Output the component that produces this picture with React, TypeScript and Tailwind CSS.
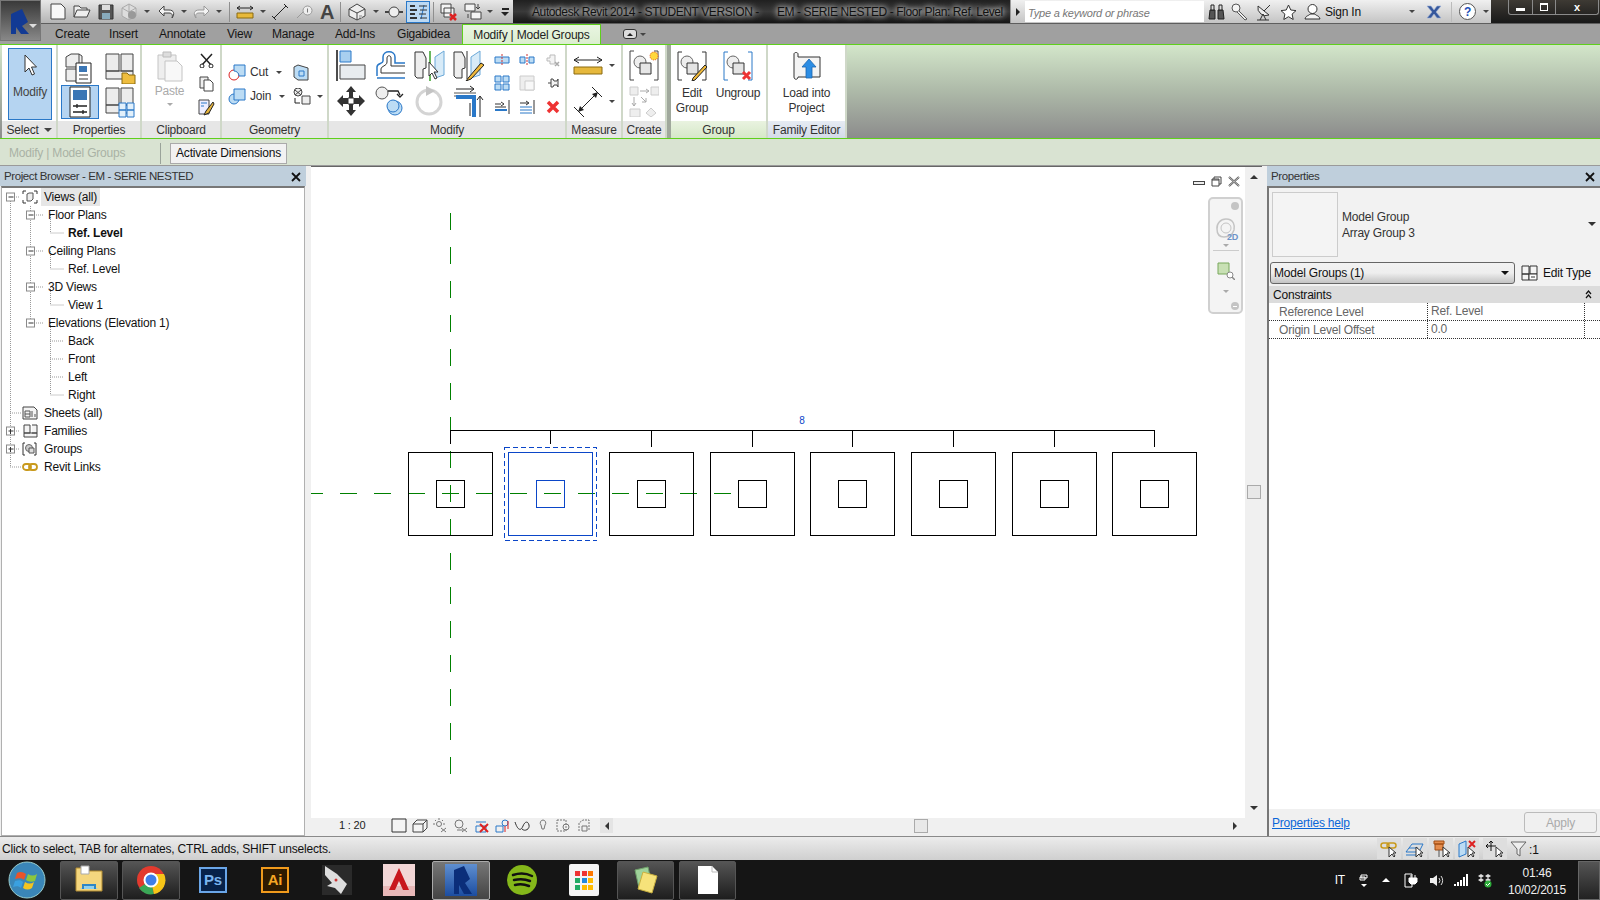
import type { ReactNode } from "react";

type IcProps = { w: number; h: number; children: ReactNode; className?: string };

function Ic({ w, h, children, className }: IcProps) {
  return (
    <svg width={w} height={h} viewBox={`0 0 ${w} ${h}`} className={className} fill="none">
      {children}
    </svg>
  );
}

const BL = "#2a78c8";
const BF = "#bcdcf4";
const DK = "#444";

function Caret({ className = "" }: { className?: string }) {
  return <span className={`inline-block h-0 w-0 border-x-[3px] border-t-[3px] border-x-transparent border-t-[#444] ${className}`} />;
}

function Sep() {
  return <div className="mx-[3px] h-[20px] w-px shrink-0 bg-[#8f8f8f]" />;
}

function Q({ w = 24, children }: { w?: number; children: ReactNode }) {
  return <div className="flex h-[23px] shrink-0 items-center justify-center" style={{ width: w }}>{children}</div>;
}

function QuickAccess() {
  return (
    <div className="flex h-[23px] w-[513px] shrink-0 items-center bg-linear-to-b from-[#e8e8e8] to-[#b4b4b4] pl-[46px]">
      <Q><Ic w={16} h={17}><path d="M1 1h10l4 4v11H1z" fill="#f8f8f8" stroke={DK} /></Ic></Q>
      <Q><Ic w={18} h={15}><path d="M1 13V2h5l2 2h6v2M1 13l3-7h13l-3 7z" fill="#eee" stroke={DK} /></Ic></Q>
      <Q><Ic w={16} h={16}><path d="M1 1h14v14H1z" fill="#555" stroke="#333" /><path d="M4 1h8v5H4z" fill="#ddd" /><path d="M4 9h8v6H4z" fill="#8ab" /></Ic></Q>
      <Q w={22}><Ic w={18} h={18}><path d="M9 1l7 4v8l-7 4-7-4V5z" fill="#ddd" stroke="#aaa" /><path d="M9 1v8l7-4M9 9l-7-4M9 9v8" stroke="#aaa" /><circle cx="12" cy="12" r="4" fill="#999" /></Ic></Q>
      <Q w={14}><Caret /></Q>
      <Q><Ic w={17} h={14}><path d="M6 1L1 6l5 5V8h5c3 0 4 2 3 5 3-4 2-8-3-8H6z" fill="#f4f4f4" stroke={DK} /></Ic></Q>
      <Q w={12}><Caret /></Q>
      <Q w={22}><Ic w={17} h={14}><path d="M11 1l5 5-5 5V8H6c-3 0-4 2-3 5-3-4-2-8 3-8h5z" fill="#f4f4f4" stroke="#999" /></Ic></Q>
      <Q w={14}><Caret /></Q>
      <Sep />
      <Q w={24}><Ic w={18} h={14}><path d="M1 3h16M1 3l3-2M1 3l3 2M17 3l-3-2M17 3l-3 2" stroke="#222" /><path d="M1 8h16v5H1z" fill="#e8b93a" stroke="#8a6a10" /></Ic></Q>
      <Q w={12}><Caret /></Q>
      <Q w={22}><Ic w={18} h={18}><path d="M3 15L15 3M1 13l4 4M13 1l4 4" stroke="#222" /></Ic></Q>
      <Q w={26}><Ic w={18} h={16}><path d="M2 14l6-6" stroke="#999" /><rect x="8" y="2" width="9" height="9" rx="4.5" fill="#eee" stroke="#999" /><path d="M12.5 4.5v4" stroke="#777" /></Ic></Q>
      <div className="flex w-[20px] shrink-0 justify-center text-[20px] font-bold leading-none text-[#444]">A</div>
      <Sep />
      <Q w={26}><Ic w={18} h={18}><path d="M9 1l8 5v7l-8 4-8-4V6z" fill="#eee" stroke={DK} /><path d="M1 6l8 4 8-4M9 10v7" stroke={DK} /><path d="M11 12h3v3h-3z" fill="#bbb" /></Ic></Q>
      <Q w={12}><Caret /></Q>
      <Q w={24}><Ic w={18} h={14}><circle cx="9" cy="7" r="5" fill="#eee" stroke={DK} /><path d="M0 7h4M14 7h4" stroke={DK} strokeWidth="2" /></Ic></Q>
      <div className="flex h-[22px] w-[24px] shrink-0 items-center justify-center border border-[#2a78c8] bg-[#bcd9f3]">
        <Ic w={18} h={16}><path d="M1 2h5M1 6h7M1 10h5M1 14h7" stroke="#333" strokeWidth="2" /><path d="M12 15l3-14" stroke={BL} /><path d="M10 2h8M11 6h7M10 10h7M11 14h7" stroke="#333" /></Ic>
      </div>
      <Sep />
      <Q w={24}><Ic w={18} h={18}><path d="M1 1h10v9H1zM4 5h10v9H4z" fill="#f4f4f4" stroke={DK} /><path d="M10 11l6 6M16 11l-6 6" stroke="#d22" strokeWidth="2.5" /></Ic></Q>
      <Q w={24}><Ic w={18} h={17}><path d="M1 1h10v7H1zM7 9h10v7H7z" fill="#f4f4f4" stroke={DK} /><path d="M14 1v5M12 4l2 2 2-2M4 11v4" stroke={DK} /></Ic></Q>
      <Q w={10}><Caret /></Q>
      <div className="ml-[3px] flex w-[14px] flex-col items-center gap-[2px]">
        <div className="h-[2px] w-[7px] bg-[#222]" />
        <span className="h-0 w-0 border-x-[4px] border-t-[4px] border-x-transparent border-t-[#222]" />
      </div>
    </div>
  );
}

function SearchCluster() {
  return (
    <div className="flex h-[23px] w-[481px] shrink-0 items-center border-l border-[#999] bg-linear-to-b from-[#f0f0f0] to-[#c4c4c4]">
      <div className="flex w-[14px] justify-center">
        <span className="h-0 w-0 border-y-[4px] border-l-[4px] border-y-transparent border-l-[#222]" />
      </div>
      <div className="flex h-[21px] w-[179px] items-center bg-white pl-[3px] pt-[3px] text-[11px] italic text-[#777]">Type a keyword or phrase</div>
      <div className="flex items-center">
        <Q w={24}><Ic w={17} h={16}><path d="M2 6h5v9H1zM10 6h5l1 9h-6z" fill="#555" stroke="#222" /><path d="M3 1h3v5H3zM11 1h3v5h-3z" fill="#ddd" stroke="#222" /></Ic></Q>
        <Q w={24}><Ic w={18} h={18}><circle cx="5" cy="5" r="4" fill="#f4f4f4" stroke="#555" /><path d="M8 8l8 8-2 1-8-8" fill="#eee" stroke="#555" /></Ic></Q>
        <Q w={24}><Ic w={18} h={18}><path d="M3 3a8 8 0 0 0 11 9z" fill="#eee" stroke="#333" /><path d="M9 8l6-6M2 17h12M8 11l-3 6M8 11l3 6" stroke="#333" /></Ic></Q>
        <Q w={24}><Ic w={17} h={16}><path d="M8.5 1l2.3 5 5.2.6-3.9 3.5 1.1 5.4-4.7-2.8-4.7 2.8 1.1-5.4L1 6.600l5.200-.6z" fill="#fff" stroke="#333" /></Ic></Q>
        <Q w={24}><Ic w={17} h={18}><circle cx="8.500" cy="6" r="4.500" fill="#fff" stroke="#333" /><path d="M1 16c1-4 4-3 5-5h5c1 2 4 1 5 5z" fill="#f4f4f4" stroke="#333" /></Ic></Q>
      </div>
      <span className="ml-[1px] w-[79px] text-[12px] text-[#111]">Sign In</span>
      <Caret className="mr-[9px] ml-[5px]" />
      <div className="flex w-[20px] justify-center">
        <Ic w={16} h={14}><path d="M1 1h4l3 4 3-4h4l-5 6 5 6h-4l-3-4-3 4H1l5-6z" fill="#35579b" stroke="#9cb0d8" strokeWidth=".6" /></Ic>
      </div>
      <div className="mx-[7px] h-[20px] w-px bg-[#bbb]" />
      <div className="flex h-[17px] w-[17px] items-center justify-center rounded-full border border-[#555] bg-white text-[12px] font-bold leading-none text-[#1c4fb8]">?</div>
      <Caret className="ml-[7px]" />
    </div>
  );
}

function TitleBar() {
  return (
    <div className="flex h-[23px] shrink-0 items-stretch">
      <QuickAccess />
      <div className="flex w-[497px] shrink-0 items-center whitespace-nowrap bg-linear-to-b from-[#202020] via-[#3a3a3a] to-[#151515] pl-[19px] text-[12px] tracking-[-0.4px] text-[#111] [text-shadow:0_0_5px_#ddd,0_0_7px_#ddd]">
        <span>Autodesk Revit 2014 - STUDENT VERSION -</span>
        <span className="ml-[18px]">EM - SERIE NESTED - Floor Plan: Ref. Level</span>
      </div>
      <SearchCluster />
      <div className="flex flex-1 bg-linear-to-b from-[#3e3a34] to-[#191919] pl-[17px]">
        <div className="flex h-[15px] w-[91px] rounded-b-[3px] border border-t-0 border-[#8a8a8a] text-[11px] font-bold text-white">
          <div className="flex w-[24px] items-end justify-center border-r border-[#8a8a8a] pb-[3px]"><div className="h-[3px] w-[9px] bg-white" /></div>
          <div className="flex w-[23px] items-center justify-center border-r border-[#8a8a8a]"><div className="h-[8px] w-[8px] border border-t-2 border-white" /></div>
          <div className="flex flex-1 items-center justify-center leading-none">x</div>
        </div>
      </div>
    </div>
  );
}

const tabs: [string, number][] = [
  ["Create", 34],
  ["Insert", 30],
  ["Annotate", 48],
  ["View", 25],
  ["Manage", 43],
  ["Add-Ins", 42],
  ["Gigabidea", 52],
];

function TabRow() {
  return (
    <div className="flex h-[21px] shrink-0 items-end border-t border-[#5e5e5e] bg-[#a0a0a0] pl-[55px] text-[12px] text-[#151515]">
      <div className="flex h-[20px] items-center gap-[20px]">
        {tabs.map(([t, w]) => (
          <span key={t} style={{ width: w }}>{t}</span>
        ))}
      </div>
      <div className="ml-[13px] flex h-[20px] w-[139px] items-center justify-center border-x border-t border-[#5fd01c] bg-linear-to-b from-[#e9f5e2] to-[#dceed0] text-[12px] text-[#222]">Modify | Model Groups</div>
      <div className="ml-[22px] flex h-[20px] items-center gap-[3px]">
        <div className="flex h-[10px] w-[14px] items-center justify-center rounded-[3px] border border-[#333] bg-[#ddd]">
          <span className="h-0 w-0 border-x-[3px] border-b-[3px] border-x-transparent border-b-[#222]" />
        </div>
        <Caret />
      </div>
    </div>
  );
}

function Panel({ w, label, labelClass = "bg-[#e6e6e6]", className = "", children }: { w: number; label: ReactNode; labelClass?: string; className?: string; children: ReactNode }) {
  return (
    <div className={`flex shrink-0 flex-col border-r-[2px] border-[#cfd8c8] bg-white ${className}`} style={{ width: w }}>
      <div className="flex-1">{children}</div>
      <div className={`flex h-[17px] items-center justify-center text-[12px] text-[#333] ${labelClass}`}>{label}</div>
    </div>
  );
}

function Cell({ children, h = 35 }: { children: ReactNode; h?: number }) {
  return <div className="flex items-center justify-center" style={{ height: h }}>{children}</div>;
}

function SelectPanel() {
  return (
    <Panel w={56} label={<span className="flex items-center gap-[5px]">Select <Caret className="border-x-[4px] border-t-[4px]" /></span>}>
      <div className="pl-[6px] pt-[3px]">
        <div className="flex h-[72px] w-[44px] flex-col items-center border border-[#2a78c8] bg-[#b5d4f1]">
          <Ic w={16} h={24} className="mt-[4px]"><path d="M3 2v17l4-4 3 7 2.500-1-3-7h5z" fill="#fff" stroke="#333" /></Ic>
          <span className="mt-[6px] text-[12px] text-[#444]">Modify</span>
        </div>
      </div>
    </Panel>
  );
}

function PropertiesPanel() {
  return (
    <Panel w={84} label="Properties">
      <div className="grid grid-cols-[43px_38px]">
        <Cell h={40}>
          <Ic w={32} h={32} className="mt-[6px]">
            <path d="M2 5l5-3h8v13H2zM2 17h13v12H2zM15 2l3 2v24l-3 1" fill="#eee" stroke={DK} />
            <path d="M12 11h15v20H12z" fill="#fff" stroke="#222" />
            <path d="M15 14h8v6h-8z" fill="#3b76b5" />
            <path d="M15 23h9M15 27h9" stroke="#333" />
          </Ic>
        </Cell>
        <Cell h={40}>
          <Ic w={32} h={32} className="mt-[6px]">
            <path d="M2 2h13v17H2zM17 2h12v17H17zM2 19h27v8H2z" fill="#ececec" stroke={DK} />
            <path d="M18 21h5l2 2h6v9H18z" fill="#eebd3f" stroke="#8a6a10" />
          </Ic>
        </Cell>
        <div className="ml-[3px] flex h-[34px] w-[38px] items-center justify-center border border-[#2a78c8] bg-[#b5d4f1]">
          <Ic w={26} h={32}>
            <path d="M3 1h20v30H3z" fill="#fff" stroke="#222" />
            <path d="M6 4h14v10H6z" fill="#3b76b5" />
            <path d="M6 20h14M6 26h14M10 18v4M16 24v4" stroke="#222" strokeWidth="1.300" />
          </Ic>
        </div>
        <Cell h={34}>
          <Ic w={32} h={31}>
            <path d="M2 1h13v17H2zM17 1h12v17H17zM2 18h27v8H2z" fill="#ececec" stroke={DK} />
            <path d="M15 16h7v7h-7zM23 16h7v7h-7zM15 23h7v7h-7zM23 23h7v7h-7z" fill="#e2f0fb" stroke={BL} />
          </Ic>
        </Cell>
      </div>
    </Panel>
  );
}

function ClipboardPanel() {
  return (
    <Panel w={80} label="Clipboard">
      <div className="grid grid-cols-[51px_22px] pl-[2px]">
        <div className="flex flex-col items-center pt-[6px]">
          <Ic w={26} h={31}>
            <path d="M1 4h18v24H1z" fill="#eee" stroke="#c4c4c4" />
            <path d="M6 1h8v5H6z" fill="#ddd" stroke="#bbb" />
            <path d="M8 10h12l5 5v15H8z" fill="#f8f8f8" stroke="#c4c4c4" />
          </Ic>
          <span className="mt-[2px] text-[12px] leading-[14px] text-[#aaa]">Paste</span>
          <Caret className="mt-[5px] border-t-[#aaa]" />
        </div>
        <div className="flex flex-col items-center pt-[8px]">
          <Ic w={15} h={15}><path d="M2 1l10 11M13 1L3 12" stroke="#222" strokeWidth="1.500" /><circle cx="3" cy="13" r="2" fill="#fff" stroke="#222" /><circle cx="12" cy="13" r="2" fill="#fff" stroke="#222" /></Ic>
          <Ic w={15} h={16} className="mt-[8px]"><path d="M1 1h8v11H1z" fill="#eee" stroke={DK} /><path d="M5 4h6l3 3v8H5z" fill="#fff" stroke={DK} /></Ic>
          <Ic w={17} h={17} className="mt-[7px]"><path d="M1 1h10v14H1z" fill="#eef" stroke={DK} /><path d="M3 4h6M3 7h3" stroke={BL} /><path d="M15 3l-7 9-2 4 5-2 5-9z" fill="#e4b23a" stroke="#222" /></Ic>
        </div>
      </div>
    </Panel>
  );
}

function GeometryPanel() {
  return (
    <Panel w={107} label="Geometry">
      <div className="grid grid-cols-[22px_43px_24px_12px] items-center pl-[6px] pt-[18px] text-[12px] text-[#333]">
        <Ic w={18} h={17}><circle cx="6" cy="11" r="5" fill="#fff" stroke="#d22" /><path d="M6 1h11v11H11a5 5 0 0 0-5-5z" fill={BF} stroke={BL} /></Ic>
        <span className="flex items-center gap-[8px]">Cut <Caret /></span>
        <Ic w={16} h={17}><path d="M1 3l4-2 10 3v12H5l-4-3z" fill="#bcdcf4" stroke={DK} /><path d="M6 7h5v5H6z" stroke={BL} /></Ic>
        <span />
        <div className="mt-[6px]"><Ic w={18} h={17}><circle cx="6" cy="11" r="5" fill={BF} stroke={BL} /><path d="M6 1h11v11H6z" fill={BF} stroke={BL} /></Ic></div>
        <span className="mt-[6px] flex items-center gap-[8px]">Join <Caret /></span>
        <div className="mt-[6px]"><Ic w={18} h={17}><circle cx="5" cy="4" r="4" fill="#eee" stroke={DK} /><path d="M2 2l6 5M8 2L2 7" stroke={DK} /><path d="M9 8h8v8H9z" fill="#eee" stroke={DK} /><path d="M2 10v5h5" stroke="#222" /></Ic></div>
        <Caret className="mt-[6px]" />
      </div>
    </Panel>
  );
}

function ModifyPanel() {
  return (
    <Panel w={238} label="Modify">
      <div className="grid grid-cols-[40px_38px_39px_39px_30px_20px_28px] pl-[2px] pt-[4px]">
        <div className="flex flex-col items-center gap-[4px]">
          <Ic w={30} h={32}><path d="M1 1v31" stroke="#111" strokeWidth="1.500" /><path d="M4 2h11v11H4z" fill="#a8cfef" stroke={BL} /><path d="M4 16h25v14H4z" fill="#e8ecef" stroke="#444" /></Ic>
          <Ic w={32} h={32}><path d="M16 1l5 6h-3v6h6v-3l6 6-6 6v-3h-6v6h3l-5 6-5-6h3v-6H8v3l-6-6 6-6v3h6V7h-3z" fill="#333" /><path d="M13 13h6v6h-6z" fill="#fff" stroke="#333" /></Ic>
        </div>
        <div className="flex flex-col items-center gap-[4px]">
          <Ic w={32} h={32}><path d="M3 27V18c0-4 6-3 6-6V8c0-7 12-7 12 0v6h10" stroke={BL} strokeWidth="1.500" /><path d="M7 24v-4c0-3 6-3 6-7V9c0-3 4-3 4 0v8h14M7 24h24" stroke="#333" /><path d="M3 29h28" stroke={BL} strokeWidth="1.500" /></Ic>
          <Ic w={32} h={32}><circle cx="8" cy="8" r="6" fill="#eee" stroke="#555" /><circle cx="21" cy="23" r="7" fill={BF} stroke={BL} /><circle cx="19" cy="21" r="6" fill={BF} stroke={BL} /><path d="M14 6h10l2 4M23 9l3 3 3-3" stroke="#222" strokeWidth="1.300" /></Ic>
        </div>
        <div className="flex flex-col items-center gap-[4px]">
          <Ic w={32} h={32}>
            <path d="M2 3h8l3 6v10l-3 1v9H4l-2-2z" fill="#eee" stroke="#333" />
            <path d="M17 2v30" stroke="#39a02a" strokeWidth="1.500" />
            <path d="M22 8l9-6v24l-9 3z" fill="#d8ebf8" stroke="#6aa8d8" />
            <path d="M16 13v14l3-3 3 6 2-1-3-6h4z" fill="#fff" stroke="#333" />
          </Ic>
          <Ic w={32} h={32}>
            <circle cx="16" cy="17" r="12" stroke="#d4d4d4" strokeWidth="3" />
            <path d="M13 1l9 5-9 5z" fill="#c4c4c4" />
          </Ic>
        </div>
        <div className="flex flex-col items-center gap-[4px]">
          <Ic w={32} h={32}>
            <path d="M2 3h8l3 6v10l-3 1v9H4l-2-2z" fill="#eee" stroke="#333" />
            <path d="M15 2v28" stroke="#333" />
            <path d="M19 8l9-6v24l-9 3z" fill="#d8ebf8" stroke="#6aa8d8" />
            <path d="M29 14l-12 14-3 4 5-2 13-14z" fill="#f0b93a" stroke="#222" />
          </Ic>
          <Ic w={32} h={32}>
            <path d="M2 8h22M2 11h22" stroke="#555" />
            <path d="M4 4h18M18 1l4 3-4 3" stroke="#222" />
            <path d="M4 12h18v20" stroke={BL} strokeWidth="4" />
            <path d="M18 18v13M28 12v20M25 15l3-4 3 4" stroke="#222" />
          </Ic>
        </div>
        <div className="flex flex-col items-center pt-[4px]">
          <Cell h={13}><Ic w={16} h={12}><path d="M1 3h14v6H1z" fill={BF} stroke={BL} /><path d="M8 0v12" stroke="#c33" strokeDasharray="2 1" /></Ic></Cell>
          <Cell h={34}><Ic w={16} h={16}><path d="M1 1h6v6H1zM9 1h6v6H9zM1 9h6v6H1zM9 9h6v6H9z" fill={BF} stroke={BL} /></Ic></Cell>
          <Cell h={13}><Ic w={16} h={14}><path d="M15 0v14M1 7h11M1 4h6M7 2l3 2-3 2" stroke="#333" /><path d="M1 10h12" stroke={BL} strokeWidth="2" /></Ic></Cell>
        </div>
        <div className="flex flex-col items-center pt-[4px]">
          <Cell h={13}><Ic w={16} h={12}><path d="M1 3h5v6H1zM10 3h5v6h-5z" fill={BF} stroke={BL} /><path d="M8 0v12" stroke="#c33" strokeDasharray="2 1" /></Ic></Cell>
          <Cell h={34}><Ic w={16} h={16}><path d="M1 1h14v14H1z" fill="#eee" stroke="#ccc" /><path d="M6 6h9v9H6z" fill="#f8f8f8" stroke="#ccc" /></Ic></Cell>
          <Cell h={13}><Ic w={16} h={14}><path d="M15 0v14M1 3h8M7 1l3 2-3 2" stroke="#333" /><path d="M1 7h12M1 10h12M1 13h12" stroke={BL} /></Ic></Cell>
        </div>
        <div className="flex flex-col items-center pl-[4px] pt-[4px]">
          <Cell h={13}><Ic w={14} h={14}><path d="M1 5h3V2h5v9H4V8H1z" fill="#f4f4f4" stroke="#bbb" /><path d="M9 9l4 4M13 9l-4 4" stroke="#aaa" strokeWidth="1.500" /></Ic></Cell>
          <Cell h={34}><Ic w={13} h={12}><path d="M1 6h3M4 2h2l1 2h3l1-2v8l-1-2H7l-1 2H4z" fill="#f4f4f4" stroke="#444" /></Ic></Cell>
          <Cell h={13}><Ic w={14} h={14}><path d="M2 2l10 10M12 2L2 12" stroke="#e33" strokeWidth="3.500" /></Ic></Cell>
        </div>
      </div>
    </Panel>
  );
}

function MeasurePanel() {
  return (
    <Panel w={56} label="Measure">
      <div className="flex flex-col pl-[6px] pt-[11px]">
        <div className="flex items-center gap-[6px]">
          <Ic w={30} h={19}><path d="M1 4h28M1 4l5-3M1 4l5 3M29 4l-5-3M29 4l-5 3" stroke="#222" /><path d="M1 11h28v7H1z" fill="#e6b83c" stroke="#8a6a10" /></Ic>
          <Caret />
        </div>
        <div className="mt-[11px] flex items-center gap-[6px]">
          <Ic w={30} h={31}><path d="M5 26L25 6M1 21l10 10M19 1l10 10" stroke="#222" /><path d="M5 26l2-6 4 4zM25 6l-2 6-4-4z" fill="#222" /></Ic>
          <Caret />
        </div>
      </div>
    </Panel>
  );
}

function CreatePanel() {
  return (
    <Panel w={44} label="Create" className="border-r-0">
      <div className="flex flex-col items-center gap-[4px] pt-[5px]">
        <Ic w={30} h={31}>
          <path d="M5 1H1v29h4M25 1h4v29h-4" stroke="#444" />
          <circle cx="11" cy="12" r="6" fill="#eee" stroke="#666" />
          <path d="M11 13h11v11H11z" fill="#e6e6e6" stroke="#333" />
          <circle cx="25" cy="6" r="4" fill="#ffd83a" stroke="#e2551b" strokeDasharray="1 1" />
        </Ic>
        <Ic w={30} h={31} className="mt-[1px]">
          <path d="M1 1h8v8H1zM22 1h8v8h-8zM1 23h10v8H1z" fill="#eee" stroke="#ccc" />
          <path d="M22 22l5 5-5 4-5-4z" fill="#eee" stroke="#ccc" />
          <path d="M11 5h9M17 3l3 2-3 2M5 11v9M3 17l2 3 2-3M12 11l5 5M13 16h4v-4" stroke="#aaa" />
        </Ic>
      </div>
    </Panel>
  );
}

function GroupPanel() {
  return (
    <Panel w={97} label="Group" labelClass="bg-linear-to-b from-[#e9f3e0] to-[#d6e8c8]" className="border-r-0">
      <div className="grid grid-cols-[42px_50px] text-center text-[12px] leading-[15px] text-[#333]">
        <div className="flex flex-col items-center pt-[6px]">
          <Ic w={30} h={30}>
            <path d="M5 1H1v28h4M25 1h4v28h-4" stroke="#333" />
            <circle cx="10" cy="11" r="6" fill="#eee" stroke="#666" />
            <path d="M10 12h11v11H10z" fill="#e4e4e4" stroke="#333" />
            <path d="M28 14L16 27l-1 3 3-1 12-13z" fill="#f0b93a" stroke="#222" />
          </Ic>
          <span className="mt-[5px]">Edit<br />Group</span>
        </div>
        <div className="flex flex-col items-center pt-[6px]">
          <Ic w={30} h={30}>
            <path d="M5 1H1v28h4M25 1h4v28h-4" stroke={BL} />
            <circle cx="10" cy="11" r="6" fill="#eee" stroke="#666" />
            <path d="M10 12h11v11H10z" fill="#e4e4e4" stroke="#333" />
            <path d="M20 21l7 7M27 21l-7 7" stroke="#e33" strokeWidth="3" />
          </Ic>
          <span className="mt-[5px]">Ungroup</span>
        </div>
      </div>
    </Panel>
  );
}

function FamilyPanel() {
  return (
    <Panel w={79} label="Family Editor" labelClass="bg-linear-to-b from-[#e6ebf3] to-[#d4dbe8]" className="border-r-0">
      <div className="flex flex-col items-center pt-[6px] text-center text-[12px] leading-[15px] text-[#333]">
        <Ic w={30} h={30}>
          <path d="M6 6V3c0-2-4-2-4 0v23c0 3 4 3 4 0h22V6z" fill="#f4f4f4" stroke="#333" />
          <path d="M17 8l7 8h-4v11h-6V16h-4z" fill="#2c8de4" stroke="#1d66ad" strokeWidth=".8" />
        </Ic>
        <span className="mt-[5px]">Load into<br />Project</span>
      </div>
    </Panel>
  );
}

function Ribbon() {
  return (
    <div className="flex h-[95px] shrink-0 border-y border-[#5fd01c] bg-linear-to-b from-[#d3e6ca] via-[#adb9a8] to-[#8c8c8c] pl-[2px]">
      <SelectPanel />
      <PropertiesPanel />
      <ClipboardPanel />
      <GeometryPanel />
      <ModifyPanel />
      <MeasurePanel />
      <CreatePanel />
      <div className="w-[4px] shrink-0 bg-[#a0a89c]" />
      <GroupPanel />
      <FamilyPanel />
    </div>
  );
}

function OptionsBar() {
  return (
    <div className="flex h-[27px] shrink-0 items-center border-b border-[#9a9a9a] bg-[#d9e3d2] pt-[2px] text-[12px]">
      <span className="w-[160px] pl-[9px] text-[#a9b2a5]">Modify | Model Groups</span>
      <div className="h-[21px] w-px bg-[#9aa39a]" />
      <div className="ml-[9px] flex h-[21px] w-[117px] items-center justify-center border border-[#aaa] bg-[#f2f2f2] text-[#111]">Activate Dimensions</div>
    </div>
  );
}

function PanelHeader({ title, w }: { title: string; w: number }) {
  return (
    <div className="flex h-[20px] shrink-0 items-center justify-between bg-[#bfcfdc] pl-[4px] pr-[5px] pt-[1px] text-[11.5px] tracking-[-0.4px] text-[#333]" style={{ width: w }}>
      <span>{title}</span>
      <Ic w={10} h={10}><path d="M1 1l8 8M9 1L1 9" stroke="#111" strokeWidth="1.800" /></Ic>
    </div>
  );
}

type Row = { t: string; lv: 0 | 1 | 2; bold?: boolean; hl?: boolean; icon?: ReactNode };

const rows: Row[] = [
  { t: "Views (all)", lv: 0, hl: true, icon: <Ic w={16} h={14}><path d="M4 1H1v3M12 1h3v3M4 13H1v-3M12 13h3v-3" stroke="#333" /><path d="M5 4l2-1h4v6l-2 2H5z" fill="#eee" stroke="#555" /></Ic> },
  { t: "Floor Plans", lv: 1 },
  { t: "Ref. Level", lv: 2, bold: true },
  { t: "Ceiling Plans", lv: 1 },
  { t: "Ref. Level", lv: 2 },
  { t: "3D Views", lv: 1 },
  { t: "View 1", lv: 2 },
  { t: "Elevations (Elevation 1)", lv: 1 },
  { t: "Back", lv: 2 },
  { t: "Front", lv: 2 },
  { t: "Left", lv: 2 },
  { t: "Right", lv: 2 },
  { t: "Sheets (all)", lv: 0, icon: <Ic w={16} h={14}><path d="M1 1h11l3 3v9H1z" fill="#f4f4f4" stroke="#444" /><path d="M3 5h5v6H3zM3 8h5M10 5v6M13 8v3" stroke="#555" /></Ic> },
  { t: "Families", lv: 0, icon: <Ic w={16} h={14}><path d="M2 1h6v8H2zM10 1h5v8h-5M2 9h13v4H2z" fill="#f4f4f4" stroke="#444" /></Ic> },
  { t: "Groups", lv: 0, icon: <Ic w={16} h={14}><path d="M3 1H1v12h2M12 1h2v12h-2" stroke="#333" /><circle cx="7" cy="6" r="3.500" fill="#ccc" stroke="#666" /><path d="M7 6h5v5H7z" fill="#ddd" stroke="#555" /></Ic> },
  { t: "Revit Links", lv: 0, icon: <Ic w={16} h={14}><rect x="1" y="4" width="8" height="6" rx="3" stroke="#c99a1d" strokeWidth="1.800" /><rect x="7" y="4" width="8" height="6" rx="3" stroke="#c99a1d" strokeWidth="1.800" /></Ic> },
];

const rowPad: Record<number, string> = { 0: "pl-[42px]", 1: "pl-[46px]", 2: "pl-[66px]" };

function TreeLines() {
  const box = (x: number, y: number, plus: boolean) => (
    <g key={`${x}-${y}`}>
      <rect x={x - 4} y={y - 4} width="8" height="8" fill="#fff" stroke="#8a8a8a" />
      <path d={`M${x - 2} ${y}h5`} stroke="#333" />
      {plus ? <path d={`M${x} ${y - 2}v5`} stroke="#333" /> : null}
    </g>
  );
  return (
    <svg className="absolute top-0 left-0" width="70" height="290" viewBox="2 188 70 290" fill="none">
      <path
        d="M10.500 197V467M10 197h10M10 413h12M10 431h10M10 449h10M10 467h12M30.500 206V323M30 215h14M30 251h14M30 287h14M30 323h14M50.500 215v18h14M50.500 251v18h14M50.500 287v18h14M50.500 323v72h14M50 341h14M50 359h14M50 377h14"
        stroke="#999"
        strokeDasharray="1 1"
      />
      {box(10.5, 197, false)}
      {box(30.5, 215, false)}
      {box(30.5, 251, false)}
      {box(30.5, 287, false)}
      {box(30.5, 323, false)}
      {box(10.5, 431, true)}
      {box(10.5, 449, true)}
    </svg>
  );
}

function ProjectBrowser() {
  return (
    <div className="flex w-[306px] shrink-0 flex-col">
      <PanelHeader title="Project Browser - EM - SERIE NESTED" w={306} />
      <div className="relative mr-[1px] ml-[1px] flex-1 border-x border-b border-t-2 border-x-[#b0b0b0] border-b-[#b0b0b0] border-t-[#777] bg-white text-[12px] text-[#111]">
        <TreeLines />
        {rows.map((r, i) => (
          <div key={i} className={`relative flex h-[18px] items-center ${rowPad[r.lv]} ${r.bold ? "font-bold" : ""}`}>
            {r.icon ? <span className="absolute left-[20px] top-[2px]">{r.icon}</span> : null}
            <span className={r.hl ? "-ml-[3px] bg-[#e6e6e6] px-[3px] leading-[18px]" : ""}>{r.t}</span>
          </div>
        ))}
      </div>
    </div>
  );
}

function CanvasDrawing() {
  const xs = [408, 508, 609, 710, 810, 911, 1012, 1112];
  const vDashes = Array.from({ length: 17 }, (_, i) => 213 + i * 34);
  const hDashes = Array.from({ length: 13 }, (_, i) => 306 + i * 34);
  return (
    <svg className="h-[651px] w-[934px]" viewBox="311 167 934 651" fill="none" shapeRendering="crispEdges">
      {vDashes.map((y) => <path key={y} d={`M450.500 ${y}v17`} stroke="#008000" />)}
      {hDashes.map((x) => <path key={x} d={`M${x} 493.500h17`} stroke="#008000" />)}
      <path d="M450.500 430.500H1154" stroke="#000" />
      {xs.map((x, i) => {
        const blue = i === 1;
        const c = blue ? "#0b46c8" : "#000";
        return (
          <g key={x}>
            <path d={`M${x + 42.5} 430v${i < 2 ? 14 : 17}`} stroke="#000" />
            <rect x={x + 0.5} y="452.500" width="84" height="83" stroke={c} />
            <rect x={x + 28.5} y="480.500" width="28" height="27" stroke={c} />
          </g>
        );
      })}
      <rect x="504.500" y="447.500" width="92" height="93" stroke="#0b46c8" strokeDasharray="5 3" />
      <text x="802" y="424" textAnchor="middle" fontSize="10" fill="#0b46c8" fontFamily="Liberation Sans, sans-serif">8</text>
    </svg>
  );
}

function ViewControls() {
  return (
    <div className="absolute top-[9px] right-[5px] flex items-center gap-[6px]">
      <div className="mt-[3px] h-[4px] w-[12px] border border-[#444] bg-[#eee]" />
      <Ic w={11} h={11}><path d="M3 3V1h7v7H8" stroke="#444" /><path d="M1 3h7v7H1z" fill="#fff" stroke="#444" /><path d="M1 4h7" stroke="#444" /></Ic>
      <Ic w={12} h={11}><path d="M1 1l10 9M11 1L1 10" stroke="#555" strokeWidth="2" /><path d="M1 1l10 9M11 1L1 10" stroke="#fff" strokeWidth=".6" /></Ic>
    </div>
  );
}

function NavBar() {
  return (
    <div className="absolute top-[30px] right-[2px] flex h-[117px] w-[35px] flex-col items-center rounded-[5px] border-2 border-[#d0d0d0] bg-[#f4f4f4] pt-[3px]">
      <div className="mr-[2px] h-[8px] w-[8px] self-end rounded-full bg-[#c4c4c4]" />
      <Ic w={26} h={26} className="mt-[6px]">
        <path d="M4 13a9 9 0 0 1 9-10c8 0 9 7 8 11-2 6-7 7-10 7-5 0-7-3-7-8z" stroke="#c4c4c4" strokeWidth="1.500" />
        <circle cx="13" cy="12" r="5" stroke="#c4c4c4" />
      </Ic>
      <span className="-mt-[10px] ml-[14px] text-[9px] font-bold leading-[10px] text-[#6c93c7]">2D</span>
      <Caret className="mt-[2px] border-t-[#aaa]" />
      <div className="mt-[3px] h-px w-[26px] bg-[#ccc]" />
      <Ic w={18} h={18} className="mt-[11px]"><path d="M1 1h11v11H1z" fill="#c8e0b4" stroke="#79a85c" /><circle cx="13" cy="13" r="3" fill="#fff" stroke="#888" /><path d="M15 15l3 3" stroke="#888" strokeWidth="1.500" /></Ic>
      <Caret className="mt-[10px] border-t-[#aaa]" />
      <div className="mr-[2px] mt-[9px] flex h-[8px] w-[8px] items-center justify-center self-end rounded-full bg-[#c4c4c4]"><div className="h-[1px] w-[4px] bg-white" /></div>
    </div>
  );
}

function ViewBar() {
  const ico = "#777";
  return (
    <div className="flex h-[18px] shrink-0 items-center bg-[#f0f0f0] pb-[3px] text-[11px] text-[#222]">
      <span className="w-[78px] pl-[28px]">1 : 20</span>
      <div className="grid w-[205px] grid-cols-[repeat(10,20.5px)] items-center justify-items-center">
        <Ic w={16} h={15}><path d="M1 1h14v13H1z" fill="#f4f4f4" stroke="#333" /></Ic>
        <Ic w={16} h={15}><path d="M1 6l4-4h10v8l-4 4H1zM1 6h10v8M11 6l4-4" fill="#f4f4f4" stroke="#444" /></Ic>
        <Ic w={14} h={15}><circle cx="6" cy="6" r="2.500" stroke={ico} /><path d="M6 0v2M0 6h2M10 6h2M2 2l1 1M10 2L9 3M8 10l5 4M13 10l-5 4" stroke={ico} /></Ic>
        <Ic w={16} h={15}><circle cx="6" cy="6" r="4" stroke={ico} /><path d="M4 12h6M9 10l5 4M14 10l-5 4" stroke={ico} /></Ic>
        <Ic w={16} h={15}><path d="M3 4h10M3 8h10v6H3z" stroke={BL} /><path d="M7 6l8 8M15 6l-8 8" stroke="#d22" strokeWidth="2" /></Ic>
        <Ic w={16} h={15}><path d="M2 8h7v6H2z" stroke={BL} /><circle cx="11" cy="5" r="3" stroke={BL} /><path d="M11 8v6M14 3v8" stroke="#d22" /></Ic>
        <Ic w={16} h={15}><path d="M1 4c3 9 6 9 8 4s5-5 6-1-4 7-7 4" stroke="#333" /></Ic>
        <Ic w={12} h={15}><path d="M6 2a3 3 0 0 1 2 5l-1 4H5L4 7a3 3 0 0 1 2-5z" stroke={ico} /></Ic>
        <Ic w={16} h={15}><path d="M2 2h9v11H2z" stroke={ico} strokeDasharray="2 1" /><circle cx="11" cy="9" r="3" stroke={ico} /></Ic>
        <Ic w={14} h={15}><path d="M2 13V5l4-3h6v11" stroke={ico} strokeDasharray="2 1" /><path d="M5 8h5v5H5z" stroke={ico} /></Ic>
      </div>
      <div className="ml-[6px] flex h-[15px] w-[13px] items-center justify-center bg-[#e4e4e4]">
        <span className="h-0 w-0 border-y-[4px] border-r-[4px] border-y-transparent border-r-[#333]" />
      </div>
      <div className="ml-[301px] h-[14px] w-[14px] border border-[#aaa] bg-[#e8e8e8]" />
      <span className="ml-[305px] h-0 w-0 border-y-[4px] border-l-[4px] border-y-transparent border-l-[#333]" />
    </div>
  );
}

function VScroll() {
  return (
    <div className="flex w-[17px] shrink-0 flex-col items-center bg-[#f0f0f0] py-[8px]">
      <span className="h-0 w-0 border-x-[4px] border-b-[4px] border-x-transparent border-b-[#333]" />
      <div className="mt-[306px] h-[14px] w-[14px] border border-[#aaa] bg-[#e8e8e8]" />
      <span className="mt-auto h-0 w-0 border-x-[4px] border-t-[4px] border-x-transparent border-t-[#333]" />
    </div>
  );
}

function DrawingArea() {
  return (
    <div className="ml-[5px] flex w-[951px] shrink-0 flex-col border-t border-[#666]">
      <div className="flex flex-1">
        <div className="relative flex-1 overflow-hidden bg-white">
          <CanvasDrawing />
          <ViewControls />
          <NavBar />
        </div>
        <VScroll />
      </div>
      <ViewBar />
    </div>
  );
}

function PropertiesPalette() {
  return (
    <div className="ml-[5px] flex w-[333px] shrink-0 flex-col text-[12px]">
      <PanelHeader title="Properties" w={333} />
      <div className="flex flex-1 flex-col border-t-2 border-l-2 border-t-[#777] border-l-[#777] bg-white">
        <div className="flex h-[72px] shrink-0 items-center bg-[#f2f2f2] pl-[3px]">
          <div className="h-[65px] w-[66px] border border-[#ccc] bg-[#f4f4f4]" />
          <div className="ml-[4px] flex flex-1 flex-col pt-[1px] leading-[16px] text-[#333]">
            <span>Model Group</span>
            <span>Array Group 3</span>
          </div>
          <span className="mr-[4px] h-0 w-0 border-x-[4px] border-t-[4px] border-x-transparent border-t-[#333]" />
        </div>
        <div className="flex h-[26px] shrink-0 items-center bg-[#f2f2f2] pl-[1px]">
          <div className="flex h-[22px] w-[245px] items-center justify-between rounded-[3px] border border-[#666] bg-linear-to-b from-[#f2f2f2] via-[#eee] to-[#c4c4c4] pl-[3px] pr-[5px] text-[#111]">
            <span>Model Groups (1)</span>
            <span className="h-0 w-0 border-x-[4px] border-t-[4px] border-x-transparent border-t-[#111]" />
          </div>
          <Ic w={17} h={16} className="ml-[6px]"><path d="M1 1h7v8H1zM9 1h7v8H9zM1 9h7v6H1z" fill="#f4f4f4" stroke="#333" /><path d="M8 9h8v6H8z" fill="#fff" stroke="#333" /><path d="M10 12h4" stroke="#333" /></Ic>
          <span className="ml-[5px] text-[#111]">Edit Type</span>
        </div>
        <div className="flex h-[17px] shrink-0 items-center justify-between bg-[#dcdcdc] pl-[4px] pr-[8px] text-[#111]">
          <span>Constraints</span>
          <Ic w={7} h={9}><path d="M1 4l2.500-3L6 4M1 8l2.500-3L6 8" stroke="#111" strokeWidth="1.200" /></Ic>
        </div>
        {[["Reference Level", "Ref. Level"], ["Origin Level Offset", "0.0"]].map(([k, v]) => (
          <div key={k} className="flex h-[18px] shrink-0 items-center border-b border-dotted border-[#333] text-[#666]">
            <span className="w-[158px] pl-[10px]">{k}</span>
            <span className="h-full w-[158px] border-x border-dotted border-[#333] pl-[3px] leading-[17px]">{v}</span>
          </div>
        ))}
        <div className="flex-1" />
        <div className="flex h-[27px] shrink-0 items-center justify-between bg-[#f0f0f0] pl-[3px] pr-[3px]">
          <span className="text-[#0a66d8] underline">Properties help</span>
          <div className="flex h-[21px] w-[73px] items-center justify-center rounded-[3px] border border-[#bbb] bg-[#f0f0f0] text-[#aaa]">Apply</div>
        </div>
      </div>
    </div>
  );
}

function StatusBar() {
  return (
    <div className="flex h-[24px] shrink-0 items-center border-t border-[#8a8a8a] bg-linear-to-b from-[#ececec] to-[#cfcfcf] pl-[2px] text-[12px] text-[#111]">
      <span className="w-[1375px]">Click to select, TAB for alternates, CTRL adds, SHIFT unselects.</span>
      <div className="flex items-center gap-[2px]">
        <div className="flex h-[21px] w-[24px] items-center justify-center bg-[#dedede]"><Ic w={18} h={18}><rect x="1" y="3" width="8" height="5" rx="2.500" stroke="#c99a1d" strokeWidth="1.500" /><rect x="7" y="3" width="9" height="5" rx="2.500" stroke="#c99a1d" strokeWidth="1.500" /><path d="M9 7v10l3-3 2 3 1-1-2-3h3z" fill="#fff" stroke="#333" /></Ic></div>
        <div className="flex h-[21px] w-[24px] items-center justify-center bg-[#dedede]"><Ic w={20} h={18}><path d="M1 12L7 4h11l-4 8zM4 8h9M1 15h10" stroke={BL} /><path d="M11 7v10l3-3 2 3 1-1-2-3h3z" fill="#fff" stroke="#333" /></Ic></div>
        <div className="flex h-[21px] w-[24px] items-center justify-center bg-[#dedede]"><Ic w={20} h={18}><path d="M3 1h10v3H3zM4 4h8v6H4z" fill="#e58c4c" stroke="#a04d12" /><path d="M8 10v7" stroke="#555" /><path d="M12 7v10l3-3 2 3 1-1-2-3h3z" fill="#fff" stroke="#333" /></Ic></div>
        <div className="flex h-[21px] w-[24px] items-center justify-center bg-[#dedede]"><Ic w={20} h={18}><path d="M2 4l7-3v13l-7 3z" fill={BF} stroke={BL} /><path d="M12 1l6 6M18 1l-6 6" stroke="#d22" strokeWidth="2" /><path d="M11 7v10l3-3 2 3 1-1-2-3h3z" fill="#fff" stroke="#333" /></Ic></div>
        <div className="ml-[2px] flex h-[21px] w-[24px] items-center justify-center bg-[#dedede]"><Ic w={20} h={18}><path d="M6 1v10M1 6h10M6 1L4 3M6 1l2 2M1 6l2-2M1 6l2 2" stroke="#111" /><path d="M11 7v10l3-3 2 3 1-1-2-3h3z" fill="#fff" stroke="#333" /></Ic></div>
        <Ic w={17} h={16} className="ml-[1px]"><path d="M1 1h15l-6 7v7l-3-2V8z" fill="#eee" stroke="#666" /></Ic>
        <span className="mt-[3px] text-[12px] text-[#111]">:1</span>
      </div>
    </div>
  );
}

function TaskSlot({ active, w = 58, ml = 0, children, strong }: { active?: boolean; w?: number; ml?: number; children: ReactNode; strong?: boolean }) {
  return (
    <div
      className={`flex h-[39px] shrink-0 items-center justify-center rounded-[2px] ${
        strong
          ? "border border-[#aaa] bg-linear-to-b from-[#777] to-[#444]"
          : active
            ? "border border-[#555] bg-linear-to-b from-[#555] to-[#1e1e1e]"
            : ""
      }`}
      style={{ width: w, marginLeft: ml }}
    >
      {children}
    </div>
  );
}

function Taskbar() {
  return (
    <div className="flex h-[40px] shrink-0 items-center bg-[#151515] text-white">
      <div className="flex w-[60px] shrink-0 justify-start pl-[8px]">
        <Ic w={38} h={38}>
          <circle cx="19" cy="19" r="18" fill="#3a86b8" stroke="#9cc" />
          <path d="M9 12c4-2 6-1 9 1l-2 6c-2-2-5-2-9-1z" fill="#e8542a" />
          <path d="M20 13c3 2 6 2 9 0l-2 7c-3 1-6 1-9-1z" fill="#8cc63e" />
          <path d="M7 20c4-1 6-1 8 1l-2 6c-2-2-5-2-8-1z" fill="#3aa0e0" />
          <path d="M17 21c3 2 6 2 9 0l-2 6c-3 2-6 2-9 0z" fill="#f4c420" />
        </Ic>
      </div>
      <TaskSlot active w={58}>
        <Ic w={32} h={32}><path d="M3 4h10l3 3h13v20H3z" fill="#f4d67e" stroke="#b08a30" /><path d="M8 2h8v8H8z" fill="#fff" stroke="#aaa" /><path d="M16 20l-9 5h18z" fill="#8fd0f0" /><path d="M10 25v-4h12v4" stroke="#2f86c6" strokeWidth="2" /></Ic>
      </TaskSlot>
      <TaskSlot active w={58} ml={4}>
        <Ic w={30} h={30}>
          <circle cx="15" cy="15" r="14" fill="#e23a2e" />
          <path d="M15 15L3 23a14 14 0 0 0 15 6z" fill="#3aa757" />
          <path d="M15 15l3 14A14 14 0 0 0 28 9H15z" fill="#f7c518" />
          <circle cx="15" cy="15" r="6.500" fill="#3f7ee8" stroke="#fff" strokeWidth="2" />
        </Ic>
      </TaskSlot>
      <TaskSlot w={28} ml={19}>
        <div className="flex h-[26px] w-[28px] items-center justify-center border-2 border-[#6aa6e8] bg-[#07224a] text-[15px] font-bold text-[#7ab4f0]">Ps</div>
      </TaskSlot>
      <TaskSlot w={28} ml={34}>
        <div className="flex h-[26px] w-[28px] items-center justify-center border-2 border-[#f09a1c] bg-[#2e1a00] text-[15px] font-bold text-[#f5a623]">Ai</div>
      </TaskSlot>
      <TaskSlot w={30} ml={33}>
        <Ic w={30} h={30}><path d="M0 0h30v30H0z" fill="#2a2a2a" /><path d="M3 1l12 8 10 10-6 10-6-6-8-2 5-3-7-8z" fill="#ddd" /><circle cx="14" cy="15" r="1.500" fill="#c33" /></Ic>
      </TaskSlot>
      <TaskSlot w={32} ml={31}>
        <Ic w={32} h={32}><path d="M0 0h32v32H0z" fill="#f2d6d6" /><path d="M0 22h32v10H0z" fill="#e8b8b8" /><path d="M16 4L6 26h6l4-9 4 9h6z" fill="#c8161d" /></Ic>
      </TaskSlot>
      <TaskSlot strong w={58} ml={17}>
        <div className="flex h-[32px] w-[32px] items-center justify-center bg-linear-to-b from-[#5f8fd0] to-[#1c4da0]">
          <Ic w={24} h={30}><path d="M5 29V5l10-4 6 13-5 4 7 11h-8l-5-9v9z" fill="#0b2e7a" /></Ic>
        </div>
      </TaskSlot>
      <TaskSlot w={30} ml={17}>
        <Ic w={30} h={32}>
          <circle cx="15" cy="16" r="15" fill="#84b71a" />
          <path d="M6 11c6-2 13-2 19 1M7 16c5-1 11-1 16 1M8 21c4-1 9-1 14 1" stroke="#111" strokeWidth="2.500" strokeLinecap="round" />
        </Ic>
      </TaskSlot>
      <TaskSlot w={30} ml={32}>
        <div className="grid h-[32px] w-[30px] grid-cols-3 content-center justify-center gap-[2px] rounded-[2px] bg-[#f4f4f4] px-[6px]">
          {["#e33", "#e33", "#f70", "#2a6", "#28d", "#fb0", "#2a6", "#fb0", "#fb0"].map((c, i) => (
            <div key={i} className="h-[5px] w-[5px]" style={{ background: c }} />
          ))}
        </div>
      </TaskSlot>
      <TaskSlot active w={57} ml={18}>
        <Ic w={32} h={30}><path d="M5 5l13-3 4 18-13 3z" fill="#9fd29a" stroke="#6fa06a" /><path d="M13 7l14 4-5 17-14-4z" fill="#f6e27a" stroke="#c9b040" /></Ic>
      </TaskSlot>
      <TaskSlot active w={57} ml={5}>
        <Ic w={24} h={30}><path d="M2 1h14l6 6v22H2z" fill="#fff" /><path d="M16 1v6h6" stroke="#bbb" /></Ic>
      </TaskSlot>
      <div className="flex flex-1 items-center justify-end text-[12px]">
        <span className="mr-[14px]">IT</span>
        <div className="mr-[14px] flex flex-col items-center gap-[3px]">
          <Ic w={9} h={7}><path d="M2 1h6v3H2zM1 3h5v3H1z" stroke="#fff" fill="#151515" /></Ic>
          <span className="h-0 w-0 border-x-[3px] border-t-[3px] border-x-transparent border-t-white" />
        </div>
        <span className="mr-[14px] h-0 w-0 border-x-[4px] border-b-[4px] border-x-transparent border-b-white" />
        <Ic w={14} h={15} className="mr-[11px]"><path d="M1 1h7v13H1z" stroke="#fff" fill="#151515" /><path d="M5 5h8v4l-2 2H7L5 9zM7 2v3M11 2v3" fill="#fff" stroke="#fff" /></Ic>
        <Ic w={15} h={13} className="mr-[9px]"><path d="M1 4h3l4-3v11L4 9H1z" fill="#eee" /><path d="M10 4a4 4 0 0 1 0 5M12 2a7 7 0 0 1 0 9" stroke="#ddd" /></Ic>
        <Ic w={15} h={12} className="mr-[9px]"><path d="M1 10h2v2H1zM4 8h2v4H4zM7 6h2v6H7zM10 3h2v9h-2zM13 0h2v12h-2z" fill="#fff" /></Ic>
        <Ic w={15} h={15} className="mr-[16px]"><path d="M1 3l3-2 3 2-3 2zM8 3l3-2 3 2-3 2zM1 7l3-2 3 2-3 2zM8 7l3-2 3 2-3 2z" fill="#ddd" /><circle cx="11" cy="11" r="3.500" fill="#2fae3c" /><path d="M9 11l1.500 1.500L13 10" stroke="#fff" /></Ic>
        <div className="flex w-[58px] flex-col items-center pt-[3px] text-[12px] leading-[17px] text-[#eee]">
          <span>01:46</span>
          <span>10/02/2015</span>
        </div>
      </div>
      <div className="ml-[12px] h-[39px] w-[22px] shrink-0 border border-[#666] bg-linear-to-b from-[#555] to-[#222]" />
    </div>
  );
}

export default function App() {
  return (
    <div className="relative flex h-[900px] w-[1600px] flex-col overflow-hidden bg-white font-['Liberation_Sans',sans-serif] tracking-[-0.2px]">
      <div className="absolute top-0 left-0 z-10 flex h-[41px] w-[41px] items-center justify-center border border-[#777] bg-linear-to-b from-[#3a3a3a] to-[#888]">
        <Ic w={24} h={28} className="-ml-[6px]"><path d="M5 27V7l11-5 6 13-6 4 7 8h-8l-5-7v7z" fill="#123a94" /></Ic>
        <span className="absolute right-[3px] bottom-[12px] h-0 w-0 border-x-[4px] border-t-[4px] border-x-transparent border-t-[#ddd]" />
      </div>
      <TitleBar />
      <TabRow />
      <Ribbon />
      <OptionsBar />
      <div className="flex min-h-0 flex-1 bg-[#f0f0f0]">
        <ProjectBrowser />
        <DrawingArea />
        <PropertiesPalette />
      </div>
      <StatusBar />
      <Taskbar />
    </div>
  );
}
